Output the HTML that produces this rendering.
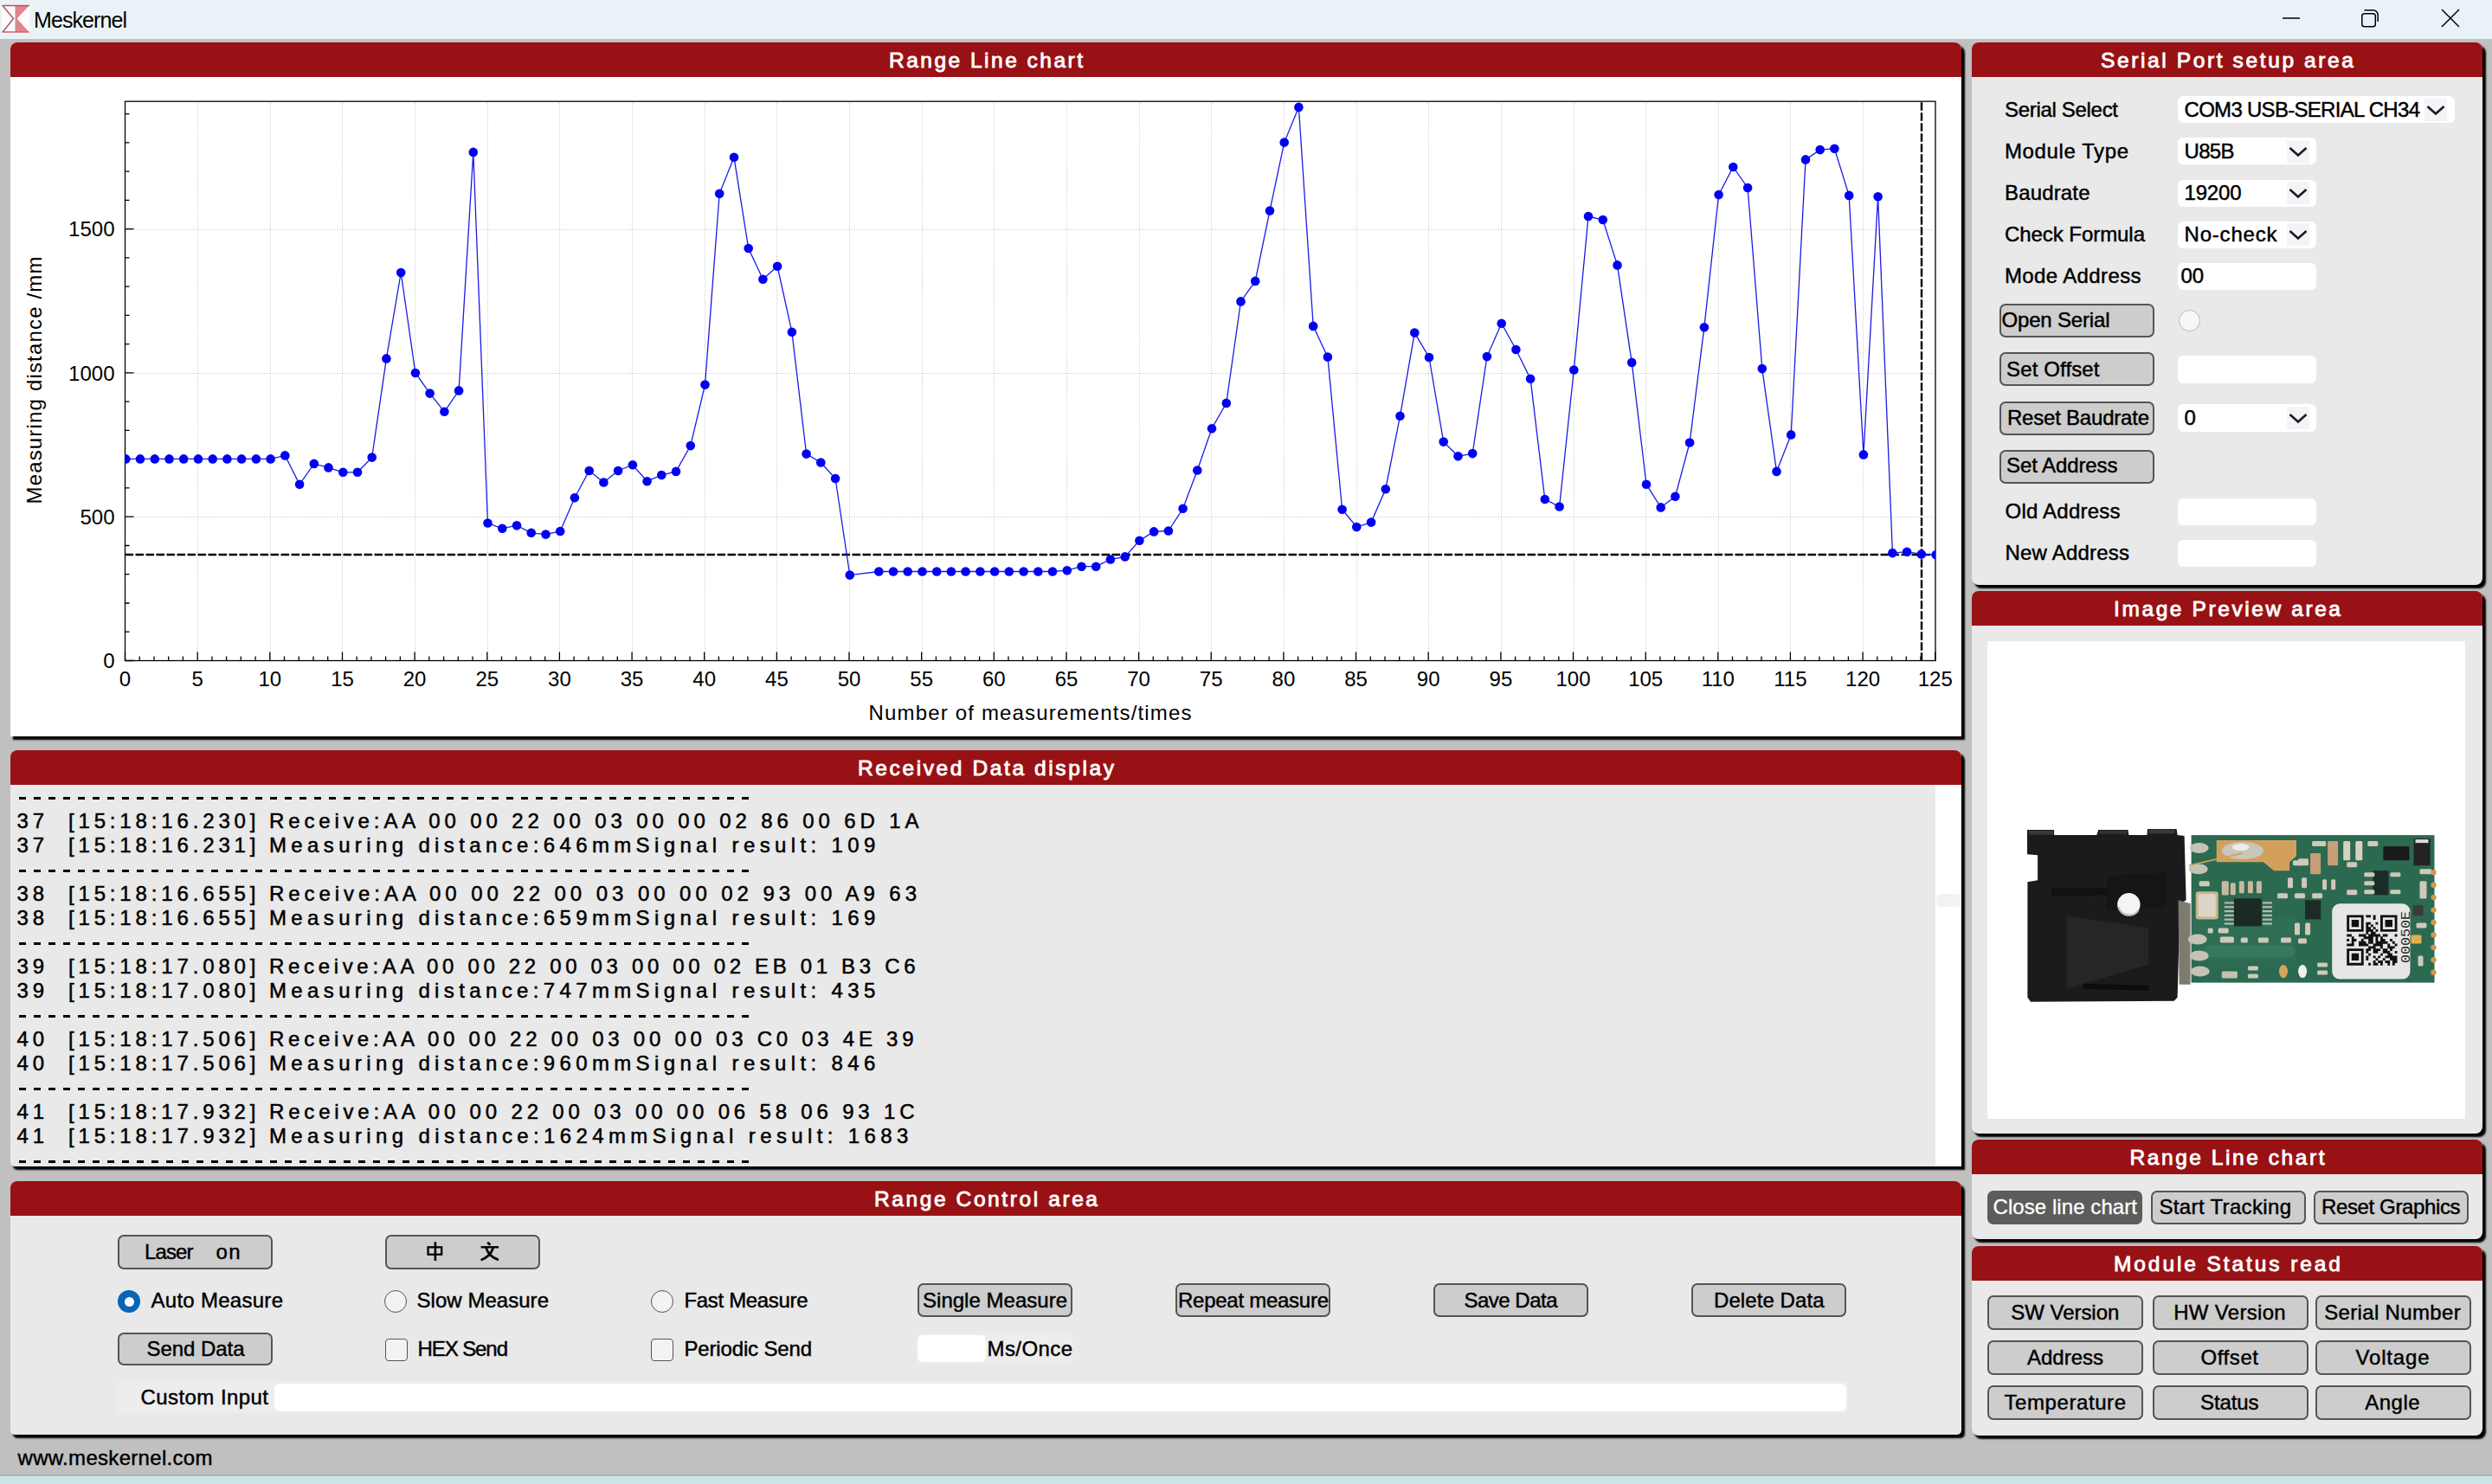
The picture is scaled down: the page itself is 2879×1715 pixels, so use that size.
<!DOCTYPE html><html><head><meta charset="utf-8"><style>
*{margin:0;padding:0;box-sizing:border-box}
html,body{width:2879px;height:1715px;overflow:hidden;background:#c0c0c0;font-family:"Liberation Sans", sans-serif;color:#000}
.a{position:absolute}
.panel{position:absolute;border-radius:8px;box-shadow:3.5px 4px 2px #000;background:#e9e9e9;overflow:hidden}
.hdr{position:absolute;left:0;top:0;right:0;height:40px;background:#981114}
.btn{position:absolute;background:#cdcdcd;border:2px solid #555;border-radius:7px}
.inp{position:absolute;background:#fff;border-radius:6px}
</style></head><body>
<div class="a" style="left:0;top:0;width:2879px;height:45px;background:#e9f3f7"></div>
<svg class="a" style="left:0;top:0" width="40" height="45" viewBox="0 0 40 45">
<rect x="2" y="5.5" width="32.5" height="33" fill="#fdfbfc"/>
<polygon points="17.5,6.5 33.5,6.5 19.6,21.5 33.5,37 17.5,37" fill="#dd8690"/>
<line x1="2.5" y1="6.5" x2="33.8" y2="6.5" stroke="#b9566a" stroke-width="1.6"/>
<line x1="2.5" y1="37" x2="33.8" y2="37" stroke="#cf6676" stroke-width="1.6"/>
<polyline points="3,6.5 15.6,21.5 3,37" fill="none" stroke="#b14f64" stroke-width="1.4"/>
</svg>
<svg class="a" style="left:2600px;top:0" width="279" height="45" viewBox="2600 0 279 45">
<line x1="2637" y1="21" x2="2657" y2="21" stroke="#000" stroke-width="1.5"/>
<rect x="2728.8" y="15.8" width="15.5" height="15" rx="2.8" fill="none" stroke="#000" stroke-width="1.5"/>
<path d="M2731.5 11.8 h10 a5.5 5.5 0 0 1 5.7 5.5 v7.8" fill="none" stroke="#000" stroke-width="1.5"/>
<path d="M2821 11 L2841 31 M2841 11 L2821 31" stroke="#000" stroke-width="1.5"/>
</svg>
<div class="a" style="left:0;top:1704px;width:2879px;height:2px;background:#a9b4bc"></div><div class="a" style="left:0;top:1706px;width:2879px;height:9px;background:#cfe4e8"></div>
<div class="panel" style="left:12px;top:49px;width:2254px;height:802px;background:#fff;border-radius:8px 8px 0 0"><div class="hdr"></div></div>
<svg class="a" style="left:0;top:0" width="2879" height="900" viewBox="0 0 2879 900">
<line x1="228.5" y1="119.2" x2="228.5" y2="763.5" stroke="#bdbdbd" stroke-width="1" stroke-dasharray="1 2"/>
<line x1="312.5" y1="119.2" x2="312.5" y2="763.5" stroke="#bdbdbd" stroke-width="1" stroke-dasharray="1 2"/>
<line x1="395.5" y1="119.2" x2="395.5" y2="763.5" stroke="#bdbdbd" stroke-width="1" stroke-dasharray="1 2"/>
<line x1="479.5" y1="119.2" x2="479.5" y2="763.5" stroke="#bdbdbd" stroke-width="1" stroke-dasharray="1 2"/>
<line x1="563.5" y1="119.2" x2="563.5" y2="763.5" stroke="#bdbdbd" stroke-width="1" stroke-dasharray="1 2"/>
<line x1="646.5" y1="119.2" x2="646.5" y2="763.5" stroke="#bdbdbd" stroke-width="1" stroke-dasharray="1 2"/>
<line x1="730.5" y1="119.2" x2="730.5" y2="763.5" stroke="#bdbdbd" stroke-width="1" stroke-dasharray="1 2"/>
<line x1="814.5" y1="119.2" x2="814.5" y2="763.5" stroke="#bdbdbd" stroke-width="1" stroke-dasharray="1 2"/>
<line x1="897.5" y1="119.2" x2="897.5" y2="763.5" stroke="#bdbdbd" stroke-width="1" stroke-dasharray="1 2"/>
<line x1="981.5" y1="119.2" x2="981.5" y2="763.5" stroke="#bdbdbd" stroke-width="1" stroke-dasharray="1 2"/>
<line x1="1065.5" y1="119.2" x2="1065.5" y2="763.5" stroke="#bdbdbd" stroke-width="1" stroke-dasharray="1 2"/>
<line x1="1148.5" y1="119.2" x2="1148.5" y2="763.5" stroke="#bdbdbd" stroke-width="1" stroke-dasharray="1 2"/>
<line x1="1232.5" y1="119.2" x2="1232.5" y2="763.5" stroke="#bdbdbd" stroke-width="1" stroke-dasharray="1 2"/>
<line x1="1316.5" y1="119.2" x2="1316.5" y2="763.5" stroke="#bdbdbd" stroke-width="1" stroke-dasharray="1 2"/>
<line x1="1399.5" y1="119.2" x2="1399.5" y2="763.5" stroke="#bdbdbd" stroke-width="1" stroke-dasharray="1 2"/>
<line x1="1483.5" y1="119.2" x2="1483.5" y2="763.5" stroke="#bdbdbd" stroke-width="1" stroke-dasharray="1 2"/>
<line x1="1567.5" y1="119.2" x2="1567.5" y2="763.5" stroke="#bdbdbd" stroke-width="1" stroke-dasharray="1 2"/>
<line x1="1650.5" y1="119.2" x2="1650.5" y2="763.5" stroke="#bdbdbd" stroke-width="1" stroke-dasharray="1 2"/>
<line x1="1734.5" y1="119.2" x2="1734.5" y2="763.5" stroke="#bdbdbd" stroke-width="1" stroke-dasharray="1 2"/>
<line x1="1818.5" y1="119.2" x2="1818.5" y2="763.5" stroke="#bdbdbd" stroke-width="1" stroke-dasharray="1 2"/>
<line x1="1901.5" y1="119.2" x2="1901.5" y2="763.5" stroke="#bdbdbd" stroke-width="1" stroke-dasharray="1 2"/>
<line x1="1985.5" y1="119.2" x2="1985.5" y2="763.5" stroke="#bdbdbd" stroke-width="1" stroke-dasharray="1 2"/>
<line x1="2068.5" y1="119.2" x2="2068.5" y2="763.5" stroke="#bdbdbd" stroke-width="1" stroke-dasharray="1 2"/>
<line x1="2152.5" y1="119.2" x2="2152.5" y2="763.5" stroke="#bdbdbd" stroke-width="1" stroke-dasharray="1 2"/>
<line x1="146.5" y1="597.5" x2="2234.0" y2="597.5" stroke="#bdbdbd" stroke-width="1" stroke-dasharray="1 2"/>
<line x1="146.5" y1="431.5" x2="2234.0" y2="431.5" stroke="#bdbdbd" stroke-width="1" stroke-dasharray="1 2"/>
<line x1="146.5" y1="265.5" x2="2234.0" y2="265.5" stroke="#bdbdbd" stroke-width="1" stroke-dasharray="1 2"/>
<rect x="144.5" y="117.2" width="2091.5" height="646.3" fill="none" stroke="#000" stroke-width="1.3"/>
<path d="M144.5 763.5 v-10 M161.2 763.5 v-5 M178.0 763.5 v-5 M194.7 763.5 v-5 M211.4 763.5 v-5 M228.2 763.5 v-10 M244.9 763.5 v-5 M261.6 763.5 v-5 M278.3 763.5 v-5 M295.1 763.5 v-5 M311.8 763.5 v-10 M328.5 763.5 v-5 M345.3 763.5 v-5 M362.0 763.5 v-5 M378.7 763.5 v-5 M395.5 763.5 v-10 M412.2 763.5 v-5 M428.9 763.5 v-5 M445.6 763.5 v-5 M462.4 763.5 v-5 M479.1 763.5 v-10 M495.8 763.5 v-5 M512.6 763.5 v-5 M529.3 763.5 v-5 M546.0 763.5 v-5 M562.8 763.5 v-10 M579.5 763.5 v-5 M596.2 763.5 v-5 M612.9 763.5 v-5 M629.7 763.5 v-5 M646.4 763.5 v-10 M663.1 763.5 v-5 M679.9 763.5 v-5 M696.6 763.5 v-5 M713.3 763.5 v-5 M730.1 763.5 v-10 M746.8 763.5 v-5 M763.5 763.5 v-5 M780.2 763.5 v-5 M797.0 763.5 v-5 M813.7 763.5 v-10 M830.4 763.5 v-5 M847.2 763.5 v-5 M863.9 763.5 v-5 M880.6 763.5 v-5 M897.4 763.5 v-10 M914.1 763.5 v-5 M930.8 763.5 v-5 M947.5 763.5 v-5 M964.3 763.5 v-5 M981.0 763.5 v-10 M997.7 763.5 v-5 M1014.5 763.5 v-5 M1031.2 763.5 v-5 M1047.9 763.5 v-5 M1064.7 763.5 v-10 M1081.4 763.5 v-5 M1098.1 763.5 v-5 M1114.8 763.5 v-5 M1131.6 763.5 v-5 M1148.3 763.5 v-10 M1165.0 763.5 v-5 M1181.8 763.5 v-5 M1198.5 763.5 v-5 M1215.2 763.5 v-5 M1232.0 763.5 v-10 M1248.7 763.5 v-5 M1265.4 763.5 v-5 M1282.1 763.5 v-5 M1298.9 763.5 v-5 M1315.6 763.5 v-10 M1332.3 763.5 v-5 M1349.1 763.5 v-5 M1365.8 763.5 v-5 M1382.5 763.5 v-5 M1399.2 763.5 v-10 M1416.0 763.5 v-5 M1432.7 763.5 v-5 M1449.4 763.5 v-5 M1466.2 763.5 v-5 M1482.9 763.5 v-10 M1499.6 763.5 v-5 M1516.4 763.5 v-5 M1533.1 763.5 v-5 M1549.8 763.5 v-5 M1566.5 763.5 v-10 M1583.3 763.5 v-5 M1600.0 763.5 v-5 M1616.7 763.5 v-5 M1633.5 763.5 v-5 M1650.2 763.5 v-10 M1666.9 763.5 v-5 M1683.7 763.5 v-5 M1700.4 763.5 v-5 M1717.1 763.5 v-5 M1733.9 763.5 v-10 M1750.6 763.5 v-5 M1767.3 763.5 v-5 M1784.0 763.5 v-5 M1800.8 763.5 v-5 M1817.5 763.5 v-10 M1834.2 763.5 v-5 M1851.0 763.5 v-5 M1867.7 763.5 v-5 M1884.4 763.5 v-5 M1901.2 763.5 v-10 M1917.9 763.5 v-5 M1934.6 763.5 v-5 M1951.3 763.5 v-5 M1968.1 763.5 v-5 M1984.8 763.5 v-10 M2001.5 763.5 v-5 M2018.3 763.5 v-5 M2035.0 763.5 v-5 M2051.7 763.5 v-5 M2068.4 763.5 v-10 M2085.2 763.5 v-5 M2101.9 763.5 v-5 M2118.6 763.5 v-5 M2135.4 763.5 v-5 M2152.1 763.5 v-10 M2168.8 763.5 v-5 M2185.6 763.5 v-5 M2202.3 763.5 v-5 M2219.0 763.5 v-5 M2235.8 763.5 v-10 M144.5 763.5 h10 M144.5 730.2 h5 M144.5 697.0 h5 M144.5 663.7 h5 M144.5 630.5 h5 M144.5 597.2 h10 M144.5 563.9 h5 M144.5 530.7 h5 M144.5 497.4 h5 M144.5 464.2 h5 M144.5 430.9 h10 M144.5 397.6 h5 M144.5 364.4 h5 M144.5 331.1 h5 M144.5 297.9 h5 M144.5 264.6 h10 M144.5 231.3 h5 M144.5 198.1 h5 M144.5 164.8 h5 M144.5 131.6 h5" stroke="#000" stroke-width="1.3" fill="none"/>
<line x1="144.5" y1="641" x2="2236.0" y2="641" stroke="#000" stroke-width="2.4" stroke-dasharray="9.6 2.4"/>
<line x1="2220" y1="118.2" x2="2220" y2="763.5" stroke="#000" stroke-width="2.4" stroke-dasharray="9.6 2.4"/>
<clipPath id="cp"><rect x="144.5" y="117.2" width="2091.5" height="646.3"/></clipPath>
<g clip-path="url(#cp)"><polyline points="145.3,530.4 162.0,530.4 178.8,530.4 195.5,530.4 212.2,530.4 229.0,530.4 245.7,530.4 262.4,530.4 279.1,530.4 295.9,530.4 312.6,530.4 329.3,526.4 346.1,559.8 362.8,535.9 379.5,540.4 396.3,545.8 413.0,545.8 429.7,528.6 446.4,414.4 463.2,315.0 479.9,431.0 496.6,454.6 513.4,475.8 530.1,451.4 546.8,175.9 563.5,604.5 580.3,610.8 597.0,607.2 613.7,615.8 630.5,617.6 647.2,614.0 663.9,575.2 680.7,544.0 697.4,557.5 714.1,544.0 730.9,537.2 747.6,556.2 764.3,549.0 781.0,544.9 797.8,515.1 814.5,444.6 831.2,223.8 848.0,181.8 864.7,287.0 881.4,322.7 898.1,307.8 914.9,383.7 931.6,524.6 948.3,534.5 965.1,553.0 981.8,664.6 1015.3,660.5 1032.0,660.5 1048.7,660.5 1065.5,660.5 1082.2,660.5 1098.9,660.5 1115.6,660.5 1132.4,660.5 1149.1,660.5 1165.8,660.5 1182.6,660.5 1199.3,660.5 1216.0,660.5 1232.8,659.2 1249.5,654.7 1266.2,654.7 1282.9,646.5 1299.7,643.4 1316.4,624.8 1333.1,614.4 1349.9,613.5 1366.6,587.8 1383.3,543.5 1400.0,495.2 1416.8,465.9 1433.5,348.4 1450.2,324.9 1467.0,243.6 1483.7,164.6 1500.4,123.9 1517.2,376.9 1533.9,412.6 1550.6,588.7 1567.3,609.0 1584.1,603.6 1600.8,565.2 1617.5,480.8 1634.3,384.6 1651.0,413.0 1667.7,510.6 1684.5,527.3 1701.2,524.1 1717.9,412.1 1734.7,373.7 1751.4,404.0 1768.1,437.8 1784.8,577.0 1801.6,585.5 1818.3,427.5 1835.0,250.0 1851.8,254.0 1868.5,306.4 1885.2,418.9 1902.0,559.8 1918.7,586.4 1935.4,573.8 1952.1,511.5 1968.9,378.2 1985.6,225.1 2002.3,193.0 2019.1,217.0 2035.8,426.1 2052.5,544.9 2069.2,502.4 2086.0,184.4 2102.7,173.1 2119.4,171.7 2136.2,225.9 2152.9,525.4 2169.6,227.2 2186.4,639.1 2203.1,637.7 2219.8,640.4 2236.6,641.3" fill="none" stroke="#1a1ae6" stroke-width="1.3"/>
<circle cx="145.3" cy="530.4" r="5.3" fill="#0000f5"/>
<circle cx="162.0" cy="530.4" r="5.3" fill="#0000f5"/>
<circle cx="178.8" cy="530.4" r="5.3" fill="#0000f5"/>
<circle cx="195.5" cy="530.4" r="5.3" fill="#0000f5"/>
<circle cx="212.2" cy="530.4" r="5.3" fill="#0000f5"/>
<circle cx="229.0" cy="530.4" r="5.3" fill="#0000f5"/>
<circle cx="245.7" cy="530.4" r="5.3" fill="#0000f5"/>
<circle cx="262.4" cy="530.4" r="5.3" fill="#0000f5"/>
<circle cx="279.1" cy="530.4" r="5.3" fill="#0000f5"/>
<circle cx="295.9" cy="530.4" r="5.3" fill="#0000f5"/>
<circle cx="312.6" cy="530.4" r="5.3" fill="#0000f5"/>
<circle cx="329.3" cy="526.4" r="5.3" fill="#0000f5"/>
<circle cx="346.1" cy="559.8" r="5.3" fill="#0000f5"/>
<circle cx="362.8" cy="535.9" r="5.3" fill="#0000f5"/>
<circle cx="379.5" cy="540.4" r="5.3" fill="#0000f5"/>
<circle cx="396.3" cy="545.8" r="5.3" fill="#0000f5"/>
<circle cx="413.0" cy="545.8" r="5.3" fill="#0000f5"/>
<circle cx="429.7" cy="528.6" r="5.3" fill="#0000f5"/>
<circle cx="446.4" cy="414.4" r="5.3" fill="#0000f5"/>
<circle cx="463.2" cy="315.0" r="5.3" fill="#0000f5"/>
<circle cx="479.9" cy="431.0" r="5.3" fill="#0000f5"/>
<circle cx="496.6" cy="454.6" r="5.3" fill="#0000f5"/>
<circle cx="513.4" cy="475.8" r="5.3" fill="#0000f5"/>
<circle cx="530.1" cy="451.4" r="5.3" fill="#0000f5"/>
<circle cx="546.8" cy="175.9" r="5.3" fill="#0000f5"/>
<circle cx="563.5" cy="604.5" r="5.3" fill="#0000f5"/>
<circle cx="580.3" cy="610.8" r="5.3" fill="#0000f5"/>
<circle cx="597.0" cy="607.2" r="5.3" fill="#0000f5"/>
<circle cx="613.7" cy="615.8" r="5.3" fill="#0000f5"/>
<circle cx="630.5" cy="617.6" r="5.3" fill="#0000f5"/>
<circle cx="647.2" cy="614.0" r="5.3" fill="#0000f5"/>
<circle cx="663.9" cy="575.2" r="5.3" fill="#0000f5"/>
<circle cx="680.7" cy="544.0" r="5.3" fill="#0000f5"/>
<circle cx="697.4" cy="557.5" r="5.3" fill="#0000f5"/>
<circle cx="714.1" cy="544.0" r="5.3" fill="#0000f5"/>
<circle cx="730.9" cy="537.2" r="5.3" fill="#0000f5"/>
<circle cx="747.6" cy="556.2" r="5.3" fill="#0000f5"/>
<circle cx="764.3" cy="549.0" r="5.3" fill="#0000f5"/>
<circle cx="781.0" cy="544.9" r="5.3" fill="#0000f5"/>
<circle cx="797.8" cy="515.1" r="5.3" fill="#0000f5"/>
<circle cx="814.5" cy="444.6" r="5.3" fill="#0000f5"/>
<circle cx="831.2" cy="223.8" r="5.3" fill="#0000f5"/>
<circle cx="848.0" cy="181.8" r="5.3" fill="#0000f5"/>
<circle cx="864.7" cy="287.0" r="5.3" fill="#0000f5"/>
<circle cx="881.4" cy="322.7" r="5.3" fill="#0000f5"/>
<circle cx="898.1" cy="307.8" r="5.3" fill="#0000f5"/>
<circle cx="914.9" cy="383.7" r="5.3" fill="#0000f5"/>
<circle cx="931.6" cy="524.6" r="5.3" fill="#0000f5"/>
<circle cx="948.3" cy="534.5" r="5.3" fill="#0000f5"/>
<circle cx="965.1" cy="553.0" r="5.3" fill="#0000f5"/>
<circle cx="981.8" cy="664.6" r="5.3" fill="#0000f5"/>
<circle cx="1015.3" cy="660.5" r="5.3" fill="#0000f5"/>
<circle cx="1032.0" cy="660.5" r="5.3" fill="#0000f5"/>
<circle cx="1048.7" cy="660.5" r="5.3" fill="#0000f5"/>
<circle cx="1065.5" cy="660.5" r="5.3" fill="#0000f5"/>
<circle cx="1082.2" cy="660.5" r="5.3" fill="#0000f5"/>
<circle cx="1098.9" cy="660.5" r="5.3" fill="#0000f5"/>
<circle cx="1115.6" cy="660.5" r="5.3" fill="#0000f5"/>
<circle cx="1132.4" cy="660.5" r="5.3" fill="#0000f5"/>
<circle cx="1149.1" cy="660.5" r="5.3" fill="#0000f5"/>
<circle cx="1165.8" cy="660.5" r="5.3" fill="#0000f5"/>
<circle cx="1182.6" cy="660.5" r="5.3" fill="#0000f5"/>
<circle cx="1199.3" cy="660.5" r="5.3" fill="#0000f5"/>
<circle cx="1216.0" cy="660.5" r="5.3" fill="#0000f5"/>
<circle cx="1232.8" cy="659.2" r="5.3" fill="#0000f5"/>
<circle cx="1249.5" cy="654.7" r="5.3" fill="#0000f5"/>
<circle cx="1266.2" cy="654.7" r="5.3" fill="#0000f5"/>
<circle cx="1282.9" cy="646.5" r="5.3" fill="#0000f5"/>
<circle cx="1299.7" cy="643.4" r="5.3" fill="#0000f5"/>
<circle cx="1316.4" cy="624.8" r="5.3" fill="#0000f5"/>
<circle cx="1333.1" cy="614.4" r="5.3" fill="#0000f5"/>
<circle cx="1349.9" cy="613.5" r="5.3" fill="#0000f5"/>
<circle cx="1366.6" cy="587.8" r="5.3" fill="#0000f5"/>
<circle cx="1383.3" cy="543.5" r="5.3" fill="#0000f5"/>
<circle cx="1400.0" cy="495.2" r="5.3" fill="#0000f5"/>
<circle cx="1416.8" cy="465.9" r="5.3" fill="#0000f5"/>
<circle cx="1433.5" cy="348.4" r="5.3" fill="#0000f5"/>
<circle cx="1450.2" cy="324.9" r="5.3" fill="#0000f5"/>
<circle cx="1467.0" cy="243.6" r="5.3" fill="#0000f5"/>
<circle cx="1483.7" cy="164.6" r="5.3" fill="#0000f5"/>
<circle cx="1500.4" cy="123.9" r="5.3" fill="#0000f5"/>
<circle cx="1517.2" cy="376.9" r="5.3" fill="#0000f5"/>
<circle cx="1533.9" cy="412.6" r="5.3" fill="#0000f5"/>
<circle cx="1550.6" cy="588.7" r="5.3" fill="#0000f5"/>
<circle cx="1567.3" cy="609.0" r="5.3" fill="#0000f5"/>
<circle cx="1584.1" cy="603.6" r="5.3" fill="#0000f5"/>
<circle cx="1600.8" cy="565.2" r="5.3" fill="#0000f5"/>
<circle cx="1617.5" cy="480.8" r="5.3" fill="#0000f5"/>
<circle cx="1634.3" cy="384.6" r="5.3" fill="#0000f5"/>
<circle cx="1651.0" cy="413.0" r="5.3" fill="#0000f5"/>
<circle cx="1667.7" cy="510.6" r="5.3" fill="#0000f5"/>
<circle cx="1684.5" cy="527.3" r="5.3" fill="#0000f5"/>
<circle cx="1701.2" cy="524.1" r="5.3" fill="#0000f5"/>
<circle cx="1717.9" cy="412.1" r="5.3" fill="#0000f5"/>
<circle cx="1734.7" cy="373.7" r="5.3" fill="#0000f5"/>
<circle cx="1751.4" cy="404.0" r="5.3" fill="#0000f5"/>
<circle cx="1768.1" cy="437.8" r="5.3" fill="#0000f5"/>
<circle cx="1784.8" cy="577.0" r="5.3" fill="#0000f5"/>
<circle cx="1801.6" cy="585.5" r="5.3" fill="#0000f5"/>
<circle cx="1818.3" cy="427.5" r="5.3" fill="#0000f5"/>
<circle cx="1835.0" cy="250.0" r="5.3" fill="#0000f5"/>
<circle cx="1851.8" cy="254.0" r="5.3" fill="#0000f5"/>
<circle cx="1868.5" cy="306.4" r="5.3" fill="#0000f5"/>
<circle cx="1885.2" cy="418.9" r="5.3" fill="#0000f5"/>
<circle cx="1902.0" cy="559.8" r="5.3" fill="#0000f5"/>
<circle cx="1918.7" cy="586.4" r="5.3" fill="#0000f5"/>
<circle cx="1935.4" cy="573.8" r="5.3" fill="#0000f5"/>
<circle cx="1952.1" cy="511.5" r="5.3" fill="#0000f5"/>
<circle cx="1968.9" cy="378.2" r="5.3" fill="#0000f5"/>
<circle cx="1985.6" cy="225.1" r="5.3" fill="#0000f5"/>
<circle cx="2002.3" cy="193.0" r="5.3" fill="#0000f5"/>
<circle cx="2019.1" cy="217.0" r="5.3" fill="#0000f5"/>
<circle cx="2035.8" cy="426.1" r="5.3" fill="#0000f5"/>
<circle cx="2052.5" cy="544.9" r="5.3" fill="#0000f5"/>
<circle cx="2069.2" cy="502.4" r="5.3" fill="#0000f5"/>
<circle cx="2086.0" cy="184.4" r="5.3" fill="#0000f5"/>
<circle cx="2102.7" cy="173.1" r="5.3" fill="#0000f5"/>
<circle cx="2119.4" cy="171.7" r="5.3" fill="#0000f5"/>
<circle cx="2136.2" cy="225.9" r="5.3" fill="#0000f5"/>
<circle cx="2152.9" cy="525.4" r="5.3" fill="#0000f5"/>
<circle cx="2169.6" cy="227.2" r="5.3" fill="#0000f5"/>
<circle cx="2186.4" cy="639.1" r="5.3" fill="#0000f5"/>
<circle cx="2203.1" cy="637.7" r="5.3" fill="#0000f5"/>
<circle cx="2219.8" cy="640.4" r="5.3" fill="#0000f5"/>
<circle cx="2236.6" cy="641.3" r="5.3" fill="#0000f5"/>
</g></svg>
<div class="panel" style="left:12px;top:867px;width:2254px;height:481px;background:#e9e9e9;border-radius:8px 8px 0 5px"><div class="hdr"></div></div>
<div class="a" style="left:2236px;top:907px;width:30px;height:441px;background:#fff"></div>
<div class="a" style="left:2237px;top:1033px;width:28px;height:15px;background:#f2f2f2;border-radius:5px"></div>
<div class="a" style="left:22px;top:921.0px;width:846px;height:3.4px;background:repeating-linear-gradient(90deg,#000 0 8px,transparent 8px 17.05px)"></div>
<div class="a" style="left:22px;top:1005.0px;width:846px;height:3.4px;background:repeating-linear-gradient(90deg,#000 0 8px,transparent 8px 17.05px)"></div>
<div class="a" style="left:22px;top:1089.0px;width:846px;height:3.4px;background:repeating-linear-gradient(90deg,#000 0 8px,transparent 8px 17.05px)"></div>
<div class="a" style="left:22px;top:1173.0px;width:846px;height:3.4px;background:repeating-linear-gradient(90deg,#000 0 8px,transparent 8px 17.05px)"></div>
<div class="a" style="left:22px;top:1257.0px;width:846px;height:3.4px;background:repeating-linear-gradient(90deg,#000 0 8px,transparent 8px 17.05px)"></div>
<div class="a" style="left:22px;top:1341.0px;width:846px;height:3.4px;background:repeating-linear-gradient(90deg,#000 0 8px,transparent 8px 17.05px)"></div>
<div class="panel" style="left:12px;top:1365px;width:2254px;height:293px;background:#e9e9e9;border-radius:8px 8px 5px 5px"><div class="hdr"></div></div>
<div class="btn" style="left:136px;top:1427px;width:179px;height:39.5px;"></div>
<div class="btn" style="left:444.5px;top:1427px;width:179px;height:39.5px;"></div>
<svg class="a" style="left:490px;top:1434px" width="90" height="30" viewBox="0 0 90 30">
<g stroke="#000" fill="none">
<rect x="4.55" y="7.35" width="15.6" height="8.4" stroke-width="2.3"/>
<line x1="12.9" y1="1.2" x2="12.9" y2="23" stroke-width="2.6"/>
<line x1="73.2" y1="1.8" x2="76.4" y2="4.8" stroke-width="2.6"/>
<line x1="65.6" y1="7.3" x2="86.1" y2="7.3" stroke-width="2.4"/>
<path d="M71.6 8.3 C73.5 14 78.5 19.5 86 22" stroke-width="2.7"/>
<path d="M79.8 8.3 C77.8 14 72.8 19.5 65.6 22.2" stroke-width="2.7"/>
</g></svg>
<div class="a" style="left:136px;top:1491px;width:26px;height:26px;border-radius:50%;background:#0a63b8"></div>
<div class="a" style="left:143.5px;top:1498.5px;width:11px;height:11px;border-radius:50%;background:#fff"></div>
<div class="a" style="left:444px;top:1491px;width:26px;height:26px;border-radius:50%;background:#f3f3f3;border:1.3px solid #555"></div>
<div class="a" style="left:752px;top:1491px;width:26px;height:26px;border-radius:50%;background:#f3f3f3;border:1.3px solid #555"></div>
<div class="btn" style="left:1060px;top:1483px;width:179px;height:39px;"></div>
<div class="btn" style="left:1358px;top:1483px;width:179px;height:39px;"></div>
<div class="btn" style="left:1656px;top:1483px;width:179px;height:39px;"></div>
<div class="btn" style="left:1954px;top:1483px;width:179px;height:39px;"></div>
<div class="btn" style="left:136px;top:1540px;width:179px;height:38px;"></div>
<div class="a" style="left:444.5px;top:1547px;width:26px;height:26px;border-radius:4px;background:#f3f3f3;border:1.3px solid #555"></div>
<div class="a" style="left:752px;top:1547px;width:26px;height:26px;border-radius:4px;background:#f3f3f3;border:1.3px solid #555"></div>
<div class="a" style="left:1060px;top:1541px;width:179px;height:35px;background:#ededed;border-radius:5px"></div>
<div class="inp" style="left:1060px;top:1543px;width:79px;height:31px"></div>
<div class="a" style="left:135px;top:1596px;width:2000px;height:37px;background:#ededed;border-radius:5px"></div>
<div class="inp" style="left:317px;top:1599px;width:1816px;height:32px"></div>
<div class="panel" style="left:2278px;top:49px;width:590px;height:627px;background:#e9e9e9;border-radius:8px"><div class="hdr"></div></div>
<div class="inp" style="left:2516px;top:111px;width:320px;height:31px"></div>
<svg class="a" style="left:2801px;top:113.5px" width="26" height="26" viewBox="0 0 26 26"><rect x="0" y="0" width="26" height="26" fill="#f4f4f6"/><path d="M3.5 9 L13 17.5 L22.5 9" fill="none" stroke="#1c1c28" stroke-width="2.7"/></svg>
<div class="inp" style="left:2516px;top:159px;width:160px;height:31px"></div>
<svg class="a" style="left:2642px;top:161.5px" width="26" height="26" viewBox="0 0 26 26"><rect x="0" y="0" width="26" height="26" fill="#f4f4f6"/><path d="M3.5 9 L13 17.5 L22.5 9" fill="none" stroke="#1c1c28" stroke-width="2.7"/></svg>
<div class="inp" style="left:2516px;top:207.5px;width:160px;height:31px"></div>
<svg class="a" style="left:2642px;top:210.0px" width="26" height="26" viewBox="0 0 26 26"><rect x="0" y="0" width="26" height="26" fill="#f4f4f6"/><path d="M3.5 9 L13 17.5 L22.5 9" fill="none" stroke="#1c1c28" stroke-width="2.7"/></svg>
<div class="inp" style="left:2516px;top:255.5px;width:160px;height:31px"></div>
<svg class="a" style="left:2642px;top:258.0px" width="26" height="26" viewBox="0 0 26 26"><rect x="0" y="0" width="26" height="26" fill="#f4f4f6"/><path d="M3.5 9 L13 17.5 L22.5 9" fill="none" stroke="#1c1c28" stroke-width="2.7"/></svg>
<div class="inp" style="left:2516px;top:303.5px;width:160px;height:31px"></div>
<div class="btn" style="left:2310px;top:351px;width:179px;height:39px;"></div>
<div class="a" style="left:2517px;top:358px;width:25px;height:25px;border-radius:50%;background:#f7f7f7;border:1.2px solid #b8b8b8"></div>
<div class="btn" style="left:2310px;top:407px;width:179px;height:39px;"></div>
<div class="inp" style="left:2516px;top:411px;width:160px;height:32px"></div>
<div class="btn" style="left:2310px;top:463.5px;width:179px;height:39px;"></div>
<div class="inp" style="left:2516px;top:467px;width:160px;height:32px"></div>
<svg class="a" style="left:2642px;top:470.0px" width="26" height="26" viewBox="0 0 26 26"><rect x="0" y="0" width="26" height="26" fill="#f4f4f6"/><path d="M3.5 9 L13 17.5 L22.5 9" fill="none" stroke="#1c1c28" stroke-width="2.7"/></svg>
<div class="btn" style="left:2310px;top:519.5px;width:179px;height:39px;"></div>
<div class="inp" style="left:2516px;top:575.5px;width:160px;height:31px"></div>
<div class="inp" style="left:2516px;top:623.5px;width:160px;height:31px"></div>
<div class="panel" style="left:2278px;top:683px;width:590px;height:627px;background:#e9e9e9;border-radius:8px"><div class="hdr"></div></div>
<div class="a" style="left:2296px;top:741px;width:552px;height:552px;background:#fff"></div>
<svg class="a" style="left:2330px;top:940px" width="500" height="230" viewBox="2330 940 500 230">
<path d="M2342.0 959.1 L2373.1 959.1 L2373.1 965.1 L2422.3 965.1 L2424.3 959.1 L2458.4 959.1 L2459.4 965.1 L2480.5 965.1 L2480.9 958.1 L2514.6 958.1 L2515.6 965.1 L2523.6 966.1 L2525.6 1040.3 L2518.6 1044.3 L2515.6 1152.7 L2511.6 1156.7 L2346.1 1157.7 L2342.4 1152.7 L2342.4 1019.3 L2354.1 1017.2 L2354.1 988.2 L2342.0 987.2 Z" fill="#1b1b1b"/>
<path d="M2388.1861958266454 1058.378812199037 L2482.4879614767256 1072.4237560192616 L2482.4879614767256 1114.5585874799358 L2388.1861958266454 1142.6484751203852 Z" fill="#262626"/>
<path d="M2370.128410914928 1026.2760834670946 L2434.333868378812 1026.2760834670946 L2434.333868378812 1034.3017656500801 L2370.128410914928 1036.3081861958267 Z" fill="#111"/>
<path d="M2434.333868378812 1012.23113964687 L2502.5521669341892 1008.2182985553773 L2502.5521669341892 1048.346709470305 L2434.333868378812 1052.3595505617977 Z" fill="#151515"/>
<path d="M2406.2439807383626 1136.629213483146 L2482.4879614767256 1138.6356340288926 L2482.4879614767256 1144.6548956661316 L2406.2439807383626 1142.6484751203852 Z" fill="#0c0c0c"/>
<rect x="2344.044943820225" y="959.6629213483146" width="28.1" height="5.0" fill="#3a3a3a"/>
<rect x="2482.4879614767256" y="958.4590690208668" width="30.1" height="5.0" fill="#3a3a3a"/>
<rect x="2425.3049759229534" y="959.6629213483146" width="32.1" height="4.0" fill="#333"/>
<path d="M2516.597110754414 1040.3210272873193 L2530.6420545746387 1044.3338683788122 L2530.6420545746387 1137.6324237560193 L2517.6003210272875 1137.6324237560193 Z" fill="#7d7b6e"/>
<circle cx="2459.4" cy="1045.3" r="13.2" fill="#f4f4f4"/>
<path d="M2447.3756019261637 1048.346709470305 A13.2 13.2 0 0 0 2470.449438202247 1052.3595505617977" fill="none" stroke="#b9b9b9" stroke-width="2"/>
<rect x="2531.6" y="965.1" width="280.9" height="170.5" fill="#2b6a50"/>
<rect x="2532.6" y="1060.4" width="120.4" height="50.2" fill="#2f7155" opacity="0.7"/>
<rect x="2546.7" y="1092.5" width="104.3" height="14.0" rx="6" fill="#367a5d"/>
<path d="M2560.7 971.1 L2653.0 971.1 L2653.0 989.2 L2645.0 996.2 L2645.0 1006.2 L2627.0 1006.2 L2614.9 996.2 L2560.7 996.2 Z" fill="#d3a05c"/>
<ellipse cx="2590.8" cy="983.1" rx="24" ry="10" fill="#c9c6bb"/>
<ellipse cx="2588.8" cy="979.1" rx="10" ry="4" fill="#eeece4"/>
<ellipse cx="2540.7" cy="980.1" rx="11" ry="6" fill="#c5c3b5"/>
<ellipse cx="2539.7" cy="1004.2" rx="11" ry="6" fill="#c5c3b5"/>
<ellipse cx="2538.7" cy="1085.5" rx="11" ry="6" fill="#c5c3b5"/>
<ellipse cx="2540.7" cy="1104.5" rx="11" ry="6" fill="#c5c3b5"/>
<ellipse cx="2541.7" cy="1122.6" rx="11" ry="6" fill="#c5c3b5"/>
<path d="M2528.6356340288926 1000.1926163723916 L2590.8346709470306 986.1476725521669" stroke="#c9a25e" stroke-width="1.6"/>
<rect x="2536.7" y="1030.3" width="26.1" height="32.1" rx="3" fill="#c8b58b"/>
<rect x="2539.7" y="1033.3" width="20.1" height="26.1" rx="2" fill="#dcd6c8"/>
<rect x="2580.8" y="1038.3" width="32.1" height="32.1" fill="#1c2a25"/>
<rect x="2569.8" y="1042.3" width="11" height="2.2" fill="#b8b8b0"/>
<rect x="2613.9" y="1042.3" width="11" height="2.2" fill="#b8b8b0"/>
<rect x="2569.8" y="1047.1" width="11" height="2.2" fill="#b8b8b0"/>
<rect x="2613.9" y="1047.1" width="11" height="2.2" fill="#b8b8b0"/>
<rect x="2569.8" y="1052.0" width="11" height="2.2" fill="#b8b8b0"/>
<rect x="2613.9" y="1052.0" width="11" height="2.2" fill="#b8b8b0"/>
<rect x="2569.8" y="1056.8" width="11" height="2.2" fill="#b8b8b0"/>
<rect x="2613.9" y="1056.8" width="11" height="2.2" fill="#b8b8b0"/>
<rect x="2569.8" y="1061.6" width="11" height="2.2" fill="#b8b8b0"/>
<rect x="2613.9" y="1061.6" width="11" height="2.2" fill="#b8b8b0"/>
<rect x="2569.8" y="1066.4" width="11" height="2.2" fill="#b8b8b0"/>
<rect x="2613.9" y="1066.4" width="11" height="2.2" fill="#b8b8b0"/>
<rect x="2663.1" y="1040.3" width="18.1" height="22.1" fill="#1d2b26"/>
<rect x="2741.3" y="1006.2" width="18.1" height="28.1" fill="#1d2b26"/>
<rect x="2753.4" y="978.1" width="30.1" height="16.1" fill="#1a1a1a"/>
<rect x="2788.5" y="969.1" width="19.1" height="31.1" fill="#232323"/>
<rect x="2790.5" y="970.1" width="15.0" height="4.0" fill="#ddd"/>
<rect x="2669.1" y="986.1" width="12.0" height="24.1" rx="1.5" fill="#c89e76"/>
<rect x="2689.1" y="972.1" width="12.0" height="28.1" rx="1.5" fill="#c89e76"/>
<rect x="2707.2" y="972.1" width="8.0" height="22.1" rx="1.5" fill="#d8d0c0"/>
<rect x="2721.3" y="972.1" width="8.0" height="22.1" rx="1.5" fill="#d8d0c0"/>
<rect x="2566.8" y="1018.3" width="8.0" height="16.1" rx="1.5" fill="#c9b8a0"/>
<rect x="2576.8" y="1020.3" width="6.0" height="14.0" rx="1.5" fill="#c9b8a0"/>
<rect x="2586.8" y="1018.3" width="6.0" height="14.0" rx="1.5" fill="#c9b8a0"/>
<rect x="2596.9" y="1018.3" width="6.0" height="14.0" rx="1.5" fill="#c9b8a0"/>
<rect x="2606.9" y="1018.3" width="6.0" height="14.0" rx="1.5" fill="#c9b8a0"/>
<rect x="2643.0" y="1014.2" width="6.0" height="12.0" rx="1.5" fill="#d0c8b8"/>
<rect x="2659.1" y="1014.2" width="6.0" height="12.0" rx="1.5" fill="#d0c8b8"/>
<rect x="2683.1" y="1016.2" width="5.0" height="12.0" rx="1.5" fill="#d0c8b8"/>
<rect x="2693.2" y="1016.2" width="5.0" height="12.0" rx="1.5" fill="#d0c8b8"/>
<rect x="2711.2" y="1028.3" width="12.0" height="6.0" rx="1.5" fill="#d0c8b8"/>
<rect x="2731.3" y="1008.2" width="12.0" height="5.0" rx="1.5" fill="#d0c8b8"/>
<rect x="2731.3" y="1018.3" width="12.0" height="5.0" rx="1.5" fill="#d0c8b8"/>
<rect x="2731.3" y="1028.3" width="12.0" height="5.0" rx="1.5" fill="#d0c8b8"/>
<rect x="2761.4" y="1008.2" width="12.0" height="5.0" rx="1.5" fill="#d0c8b8"/>
<rect x="2761.4" y="1028.3" width="12.0" height="5.0" rx="1.5" fill="#d0c8b8"/>
<rect x="2795.5" y="1018.3" width="8.0" height="20.1" rx="1.5" fill="#d0c8b8"/>
<rect x="2795.5" y="1004.2" width="14.0" height="6.0" rx="1.5" fill="#d0c8b8"/>
<rect x="2562.7" y="1072.4" width="12.0" height="6.0" rx="1.5" fill="#d0c8b8"/>
<rect x="2564.8" y="1082.5" width="16.1" height="7.0" rx="1.5" fill="#d0c8b8"/>
<rect x="2588.8" y="1083.5" width="8.0" height="6.0" rx="1.5" fill="#d0c8b8"/>
<rect x="2608.9" y="1083.5" width="12.0" height="6.0" rx="1.5" fill="#d0c8b8"/>
<rect x="2635.0" y="1083.5" width="12.0" height="6.0" rx="1.5" fill="#d0c8b8"/>
<rect x="2655.0" y="1084.5" width="10.0" height="6.0" rx="1.5" fill="#d0c8b8"/>
<rect x="2651.0" y="1066.4" width="6.0" height="14.0" rx="1.5" fill="#d0c8b8"/>
<rect x="2663.1" y="1066.4" width="6.0" height="14.0" rx="1.5" fill="#d0c8b8"/>
<rect x="2566.8" y="1122.6" width="18.1" height="8.0" rx="1.5" fill="#c8c0b0"/>
<rect x="2596.9" y="1116.6" width="12.0" height="5.0" rx="1.5" fill="#d0c8b8"/>
<rect x="2596.9" y="1125.6" width="12.0" height="5.0" rx="1.5" fill="#d0c8b8"/>
<rect x="2677.1" y="1112.6" width="12.0" height="5.0" rx="1.5" fill="#d0c8b8"/>
<rect x="2677.1" y="1121.6" width="12.0" height="5.0" rx="1.5" fill="#d0c8b8"/>
<rect x="2649.0" y="994.2" width="12.0" height="6.0" rx="1.5" fill="#d0c8b8"/>
<rect x="2540.7" y="1018.3" width="12.0" height="6.0" rx="1.5" fill="#d0c8b8"/>
<rect x="2550.7" y="1072.4" width="6.0" height="6.0" rx="1.5" fill="#d0c8b8"/>
<rect x="2631.0" y="1032.3" width="12.0" height="6.0" rx="1.5" fill="#d0c8b8"/>
<rect x="2651.0" y="1032.3" width="12.0" height="6.0" rx="1.5" fill="#d0c8b8"/>
<rect x="2671.1" y="1032.3" width="12.0" height="6.0" rx="1.5" fill="#d0c8b8"/>
<rect x="2787.5" y="1046.3" width="12.0" height="12.0" rx="1.5" fill="#3a3a3a"/>
<rect x="2791.5" y="1066.4" width="12.0" height="6.0" rx="1.5" fill="#d0c8b8"/>
<rect x="2793.5" y="1104.5" width="6.0" height="12.0" rx="1.5" fill="#d0c8b8"/>
<rect x="2785.5" y="1080.4" width="12.0" height="10.0" rx="1.5" fill="#e0b050"/>
<rect x="2671.1" y="972.1" width="16.1" height="6.0" rx="1.5" fill="#d0c8b8"/>
<rect x="2735.3" y="972.1" width="12.0" height="6.0" rx="1.5" fill="#d0c8b8"/>
<rect x="2711.2" y="996.2" width="12.0" height="6.0" rx="1.5" fill="#d0c8b8"/>
<rect x="2655.0" y="992.2" width="12.0" height="8.0" rx="1.5" fill="#d0c8b8"/>
<ellipse cx="2638.0" cy="1122.6" rx="5" ry="7.5" fill="#d6a45e"/>
<ellipse cx="2660.1" cy="1122.6" rx="5" ry="7.5" fill="#f0f0f0"/>
<circle cx="2811.5" cy="1008.2" r="3.2" fill="#c99a50"/>
<circle cx="2811.5" cy="1022.7" r="3.2" fill="#c99a50"/>
<circle cx="2811.5" cy="1037.1" r="3.2" fill="#c99a50"/>
<circle cx="2811.5" cy="1051.6" r="3.2" fill="#c99a50"/>
<circle cx="2811.5" cy="1066.0" r="3.2" fill="#c99a50"/>
<circle cx="2811.5" cy="1080.4" r="3.2" fill="#c99a50"/>
<circle cx="2811.5" cy="1094.9" r="3.2" fill="#c99a50"/>
<circle cx="2811.5" cy="1109.3" r="3.2" fill="#c99a50"/>
<circle cx="2811.5" cy="1123.8" r="3.2" fill="#c99a50"/>
<rect x="2694.2" y="1044.3" width="90.3" height="87.3" rx="9" fill="#e6e6e6"/>
<rect x="2711.2" y="1057.4" width="58.2" height="58.2" fill="#e6e6e6"/>
<path d="M2711.22 1057.38h2.87v2.87h-2.87zM2713.99 1057.38h2.87v2.87h-2.87zM2716.76 1057.38h2.87v2.87h-2.87zM2719.53 1057.38h2.87v2.87h-2.87zM2722.30 1057.38h2.87v2.87h-2.87zM2725.07 1057.38h2.87v2.87h-2.87zM2727.84 1057.38h2.87v2.87h-2.87zM2733.39 1057.38h2.87v2.87h-2.87zM2736.16 1057.38h2.87v2.87h-2.87zM2741.70 1057.38h2.87v2.87h-2.87zM2750.01 1057.38h2.87v2.87h-2.87zM2752.78 1057.38h2.87v2.87h-2.87zM2755.55 1057.38h2.87v2.87h-2.87zM2758.32 1057.38h2.87v2.87h-2.87zM2761.09 1057.38h2.87v2.87h-2.87zM2763.86 1057.38h2.87v2.87h-2.87zM2766.64 1057.38h2.87v2.87h-2.87zM2711.22 1060.15h2.87v2.87h-2.87zM2727.84 1060.15h2.87v2.87h-2.87zM2741.70 1060.15h2.87v2.87h-2.87zM2750.01 1060.15h2.87v2.87h-2.87zM2766.64 1060.15h2.87v2.87h-2.87zM2711.22 1062.92h2.87v2.87h-2.87zM2716.76 1062.92h2.87v2.87h-2.87zM2719.53 1062.92h2.87v2.87h-2.87zM2722.30 1062.92h2.87v2.87h-2.87zM2727.84 1062.92h2.87v2.87h-2.87zM2750.01 1062.92h2.87v2.87h-2.87zM2755.55 1062.92h2.87v2.87h-2.87zM2758.32 1062.92h2.87v2.87h-2.87zM2761.09 1062.92h2.87v2.87h-2.87zM2766.64 1062.92h2.87v2.87h-2.87zM2711.22 1065.69h2.87v2.87h-2.87zM2716.76 1065.69h2.87v2.87h-2.87zM2719.53 1065.69h2.87v2.87h-2.87zM2722.30 1065.69h2.87v2.87h-2.87zM2727.84 1065.69h2.87v2.87h-2.87zM2733.39 1065.69h2.87v2.87h-2.87zM2736.16 1065.69h2.87v2.87h-2.87zM2744.47 1065.69h2.87v2.87h-2.87zM2750.01 1065.69h2.87v2.87h-2.87zM2755.55 1065.69h2.87v2.87h-2.87zM2758.32 1065.69h2.87v2.87h-2.87zM2761.09 1065.69h2.87v2.87h-2.87zM2766.64 1065.69h2.87v2.87h-2.87zM2711.22 1068.46h2.87v2.87h-2.87zM2716.76 1068.46h2.87v2.87h-2.87zM2719.53 1068.46h2.87v2.87h-2.87zM2722.30 1068.46h2.87v2.87h-2.87zM2727.84 1068.46h2.87v2.87h-2.87zM2733.39 1068.46h2.87v2.87h-2.87zM2738.93 1068.46h2.87v2.87h-2.87zM2750.01 1068.46h2.87v2.87h-2.87zM2755.55 1068.46h2.87v2.87h-2.87zM2758.32 1068.46h2.87v2.87h-2.87zM2761.09 1068.46h2.87v2.87h-2.87zM2766.64 1068.46h2.87v2.87h-2.87zM2711.22 1071.23h2.87v2.87h-2.87zM2727.84 1071.23h2.87v2.87h-2.87zM2733.39 1071.23h2.87v2.87h-2.87zM2736.16 1071.23h2.87v2.87h-2.87zM2741.70 1071.23h2.87v2.87h-2.87zM2750.01 1071.23h2.87v2.87h-2.87zM2766.64 1071.23h2.87v2.87h-2.87zM2711.22 1074.00h2.87v2.87h-2.87zM2713.99 1074.00h2.87v2.87h-2.87zM2716.76 1074.00h2.87v2.87h-2.87zM2719.53 1074.00h2.87v2.87h-2.87zM2722.30 1074.00h2.87v2.87h-2.87zM2725.07 1074.00h2.87v2.87h-2.87zM2727.84 1074.00h2.87v2.87h-2.87zM2733.39 1074.00h2.87v2.87h-2.87zM2736.16 1074.00h2.87v2.87h-2.87zM2738.93 1074.00h2.87v2.87h-2.87zM2744.47 1074.00h2.87v2.87h-2.87zM2750.01 1074.00h2.87v2.87h-2.87zM2752.78 1074.00h2.87v2.87h-2.87zM2755.55 1074.00h2.87v2.87h-2.87zM2758.32 1074.00h2.87v2.87h-2.87zM2761.09 1074.00h2.87v2.87h-2.87zM2763.86 1074.00h2.87v2.87h-2.87zM2766.64 1074.00h2.87v2.87h-2.87zM2733.39 1076.77h2.87v2.87h-2.87zM2738.93 1076.77h2.87v2.87h-2.87zM2741.70 1076.77h2.87v2.87h-2.87zM2711.22 1079.54h2.87v2.87h-2.87zM2713.99 1079.54h2.87v2.87h-2.87zM2725.07 1079.54h2.87v2.87h-2.87zM2727.84 1079.54h2.87v2.87h-2.87zM2730.62 1079.54h2.87v2.87h-2.87zM2736.16 1079.54h2.87v2.87h-2.87zM2738.93 1079.54h2.87v2.87h-2.87zM2741.70 1079.54h2.87v2.87h-2.87zM2744.47 1079.54h2.87v2.87h-2.87zM2747.24 1079.54h2.87v2.87h-2.87zM2752.78 1079.54h2.87v2.87h-2.87zM2755.55 1079.54h2.87v2.87h-2.87zM2766.64 1079.54h2.87v2.87h-2.87zM2716.76 1082.31h2.87v2.87h-2.87zM2730.62 1082.31h2.87v2.87h-2.87zM2733.39 1082.31h2.87v2.87h-2.87zM2736.16 1082.31h2.87v2.87h-2.87zM2738.93 1082.31h2.87v2.87h-2.87zM2744.47 1082.31h2.87v2.87h-2.87zM2750.01 1082.31h2.87v2.87h-2.87zM2711.22 1085.08h2.87v2.87h-2.87zM2716.76 1085.08h2.87v2.87h-2.87zM2719.53 1085.08h2.87v2.87h-2.87zM2727.84 1085.08h2.87v2.87h-2.87zM2736.16 1085.08h2.87v2.87h-2.87zM2738.93 1085.08h2.87v2.87h-2.87zM2744.47 1085.08h2.87v2.87h-2.87zM2750.01 1085.08h2.87v2.87h-2.87zM2752.78 1085.08h2.87v2.87h-2.87zM2761.09 1085.08h2.87v2.87h-2.87zM2716.76 1087.85h2.87v2.87h-2.87zM2725.07 1087.85h2.87v2.87h-2.87zM2727.84 1087.85h2.87v2.87h-2.87zM2730.62 1087.85h2.87v2.87h-2.87zM2736.16 1087.85h2.87v2.87h-2.87zM2738.93 1087.85h2.87v2.87h-2.87zM2744.47 1087.85h2.87v2.87h-2.87zM2747.24 1087.85h2.87v2.87h-2.87zM2750.01 1087.85h2.87v2.87h-2.87zM2752.78 1087.85h2.87v2.87h-2.87zM2755.55 1087.85h2.87v2.87h-2.87zM2763.86 1087.85h2.87v2.87h-2.87zM2711.22 1090.62h2.87v2.87h-2.87zM2713.99 1090.62h2.87v2.87h-2.87zM2716.76 1090.62h2.87v2.87h-2.87zM2725.07 1090.62h2.87v2.87h-2.87zM2727.84 1090.62h2.87v2.87h-2.87zM2730.62 1090.62h2.87v2.87h-2.87zM2733.39 1090.62h2.87v2.87h-2.87zM2741.70 1090.62h2.87v2.87h-2.87zM2744.47 1090.62h2.87v2.87h-2.87zM2747.24 1090.62h2.87v2.87h-2.87zM2750.01 1090.62h2.87v2.87h-2.87zM2758.32 1090.62h2.87v2.87h-2.87zM2766.64 1090.62h2.87v2.87h-2.87zM2736.16 1093.40h2.87v2.87h-2.87zM2738.93 1093.40h2.87v2.87h-2.87zM2741.70 1093.40h2.87v2.87h-2.87zM2750.01 1093.40h2.87v2.87h-2.87zM2758.32 1093.40h2.87v2.87h-2.87zM2761.09 1093.40h2.87v2.87h-2.87zM2763.86 1093.40h2.87v2.87h-2.87zM2711.22 1096.17h2.87v2.87h-2.87zM2713.99 1096.17h2.87v2.87h-2.87zM2716.76 1096.17h2.87v2.87h-2.87zM2719.53 1096.17h2.87v2.87h-2.87zM2722.30 1096.17h2.87v2.87h-2.87zM2725.07 1096.17h2.87v2.87h-2.87zM2727.84 1096.17h2.87v2.87h-2.87zM2733.39 1096.17h2.87v2.87h-2.87zM2736.16 1096.17h2.87v2.87h-2.87zM2741.70 1096.17h2.87v2.87h-2.87zM2744.47 1096.17h2.87v2.87h-2.87zM2747.24 1096.17h2.87v2.87h-2.87zM2752.78 1096.17h2.87v2.87h-2.87zM2755.55 1096.17h2.87v2.87h-2.87zM2761.09 1096.17h2.87v2.87h-2.87zM2711.22 1098.94h2.87v2.87h-2.87zM2727.84 1098.94h2.87v2.87h-2.87zM2733.39 1098.94h2.87v2.87h-2.87zM2741.70 1098.94h2.87v2.87h-2.87zM2744.47 1098.94h2.87v2.87h-2.87zM2752.78 1098.94h2.87v2.87h-2.87zM2755.55 1098.94h2.87v2.87h-2.87zM2758.32 1098.94h2.87v2.87h-2.87zM2766.64 1098.94h2.87v2.87h-2.87zM2711.22 1101.71h2.87v2.87h-2.87zM2716.76 1101.71h2.87v2.87h-2.87zM2719.53 1101.71h2.87v2.87h-2.87zM2722.30 1101.71h2.87v2.87h-2.87zM2727.84 1101.71h2.87v2.87h-2.87zM2736.16 1101.71h2.87v2.87h-2.87zM2750.01 1101.71h2.87v2.87h-2.87zM2758.32 1101.71h2.87v2.87h-2.87zM2761.09 1101.71h2.87v2.87h-2.87zM2711.22 1104.48h2.87v2.87h-2.87zM2716.76 1104.48h2.87v2.87h-2.87zM2719.53 1104.48h2.87v2.87h-2.87zM2722.30 1104.48h2.87v2.87h-2.87zM2727.84 1104.48h2.87v2.87h-2.87zM2733.39 1104.48h2.87v2.87h-2.87zM2741.70 1104.48h2.87v2.87h-2.87zM2747.24 1104.48h2.87v2.87h-2.87zM2755.55 1104.48h2.87v2.87h-2.87zM2758.32 1104.48h2.87v2.87h-2.87zM2761.09 1104.48h2.87v2.87h-2.87zM2763.86 1104.48h2.87v2.87h-2.87zM2766.64 1104.48h2.87v2.87h-2.87zM2711.22 1107.25h2.87v2.87h-2.87zM2716.76 1107.25h2.87v2.87h-2.87zM2719.53 1107.25h2.87v2.87h-2.87zM2722.30 1107.25h2.87v2.87h-2.87zM2727.84 1107.25h2.87v2.87h-2.87zM2733.39 1107.25h2.87v2.87h-2.87zM2744.47 1107.25h2.87v2.87h-2.87zM2752.78 1107.25h2.87v2.87h-2.87zM2761.09 1107.25h2.87v2.87h-2.87zM2763.86 1107.25h2.87v2.87h-2.87zM2766.64 1107.25h2.87v2.87h-2.87zM2711.22 1110.02h2.87v2.87h-2.87zM2727.84 1110.02h2.87v2.87h-2.87zM2741.70 1110.02h2.87v2.87h-2.87zM2747.24 1110.02h2.87v2.87h-2.87zM2750.01 1110.02h2.87v2.87h-2.87zM2755.55 1110.02h2.87v2.87h-2.87zM2758.32 1110.02h2.87v2.87h-2.87zM2763.86 1110.02h2.87v2.87h-2.87zM2766.64 1110.02h2.87v2.87h-2.87zM2711.22 1112.79h2.87v2.87h-2.87zM2713.99 1112.79h2.87v2.87h-2.87zM2716.76 1112.79h2.87v2.87h-2.87zM2719.53 1112.79h2.87v2.87h-2.87zM2722.30 1112.79h2.87v2.87h-2.87zM2725.07 1112.79h2.87v2.87h-2.87zM2727.84 1112.79h2.87v2.87h-2.87zM2736.16 1112.79h2.87v2.87h-2.87zM2741.70 1112.79h2.87v2.87h-2.87zM2744.47 1112.79h2.87v2.87h-2.87zM2750.01 1112.79h2.87v2.87h-2.87zM2758.32 1112.79h2.87v2.87h-2.87zM2763.86 1112.79h2.87v2.87h-2.87z" fill="#111"/>
<text transform="translate(2784 1113) rotate(-90)" font-family='"Liberation Mono", monospace' font-size="15" fill="#222" textLength="60" lengthAdjust="spacingAndGlyphs">00050E</text>
</svg>
<div class="panel" style="left:2278px;top:1317px;width:590px;height:115px;background:#e9e9e9;border-radius:8px"><div class="hdr"></div></div>
<div class="btn" style="left:2296px;top:1375.5px;width:179px;height:39px;background:#5c5c5c;border-color:#5c5c5c"></div>
<div class="btn" style="left:2484.5px;top:1375.5px;width:179px;height:39px;"></div>
<div class="btn" style="left:2672.5px;top:1375.5px;width:179px;height:39px;"></div>
<div class="panel" style="left:2278px;top:1440px;width:590px;height:219px;background:#e9e9e9;border-radius:8px"><div class="hdr"></div></div>
<div class="btn" style="left:2296px;top:1497px;width:180px;height:39.5px;"></div>
<div class="btn" style="left:2486.5px;top:1497px;width:180px;height:39.5px;"></div>
<div class="btn" style="left:2674.5px;top:1497px;width:180px;height:39.5px;"></div>
<div class="btn" style="left:2296px;top:1549px;width:180px;height:39.5px;"></div>
<div class="btn" style="left:2486.5px;top:1549px;width:180px;height:39.5px;"></div>
<div class="btn" style="left:2674.5px;top:1549px;width:180px;height:39.5px;"></div>
<div class="btn" style="left:2296px;top:1601px;width:180px;height:39.5px;"></div>
<div class="btn" style="left:2486.5px;top:1601px;width:180px;height:39.5px;"></div>
<div class="btn" style="left:2674.5px;top:1601px;width:180px;height:39.5px;"></div>
<svg class="a" style="left:0;top:0" width="2879" height="1715" viewBox="0 0 2879 1715" font-family='"Liberation Sans", sans-serif'>
<text x="39" y="32.3" font-size="25" fill="#000" text-anchor="start" textLength="108" lengthAdjust="spacing">Meskernel</text>
<text x="1139.0" y="78.2" font-size="24.5" fill="#fff" stroke="#fff" stroke-width="0.9" text-anchor="middle" textLength="224" lengthAdjust="spacing">Range Line chart</text>
<text x="144.5" y="792.5" font-size="24" fill="#000" text-anchor="middle">0</text>
<text x="228.2" y="792.5" font-size="24" fill="#000" text-anchor="middle">5</text>
<text x="311.8" y="792.5" font-size="24" fill="#000" text-anchor="middle">10</text>
<text x="395.5" y="792.5" font-size="24" fill="#000" text-anchor="middle">15</text>
<text x="479.1" y="792.5" font-size="24" fill="#000" text-anchor="middle">20</text>
<text x="562.8" y="792.5" font-size="24" fill="#000" text-anchor="middle">25</text>
<text x="646.4" y="792.5" font-size="24" fill="#000" text-anchor="middle">30</text>
<text x="730.1" y="792.5" font-size="24" fill="#000" text-anchor="middle">35</text>
<text x="813.7" y="792.5" font-size="24" fill="#000" text-anchor="middle">40</text>
<text x="897.4" y="792.5" font-size="24" fill="#000" text-anchor="middle">45</text>
<text x="981.0" y="792.5" font-size="24" fill="#000" text-anchor="middle">50</text>
<text x="1064.7" y="792.5" font-size="24" fill="#000" text-anchor="middle">55</text>
<text x="1148.3" y="792.5" font-size="24" fill="#000" text-anchor="middle">60</text>
<text x="1232.0" y="792.5" font-size="24" fill="#000" text-anchor="middle">65</text>
<text x="1315.6" y="792.5" font-size="24" fill="#000" text-anchor="middle">70</text>
<text x="1399.2" y="792.5" font-size="24" fill="#000" text-anchor="middle">75</text>
<text x="1482.9" y="792.5" font-size="24" fill="#000" text-anchor="middle">80</text>
<text x="1566.5" y="792.5" font-size="24" fill="#000" text-anchor="middle">85</text>
<text x="1650.2" y="792.5" font-size="24" fill="#000" text-anchor="middle">90</text>
<text x="1733.9" y="792.5" font-size="24" fill="#000" text-anchor="middle">95</text>
<text x="1817.5" y="792.5" font-size="24" fill="#000" text-anchor="middle">100</text>
<text x="1901.2" y="792.5" font-size="24" fill="#000" text-anchor="middle">105</text>
<text x="1984.8" y="792.5" font-size="24" fill="#000" text-anchor="middle">110</text>
<text x="2068.4" y="792.5" font-size="24" fill="#000" text-anchor="middle">115</text>
<text x="2152.1" y="792.5" font-size="24" fill="#000" text-anchor="middle">120</text>
<text x="2235.8" y="792.5" font-size="24" fill="#000" text-anchor="middle">125</text>
<text x="132.5" y="772.1" font-size="24" fill="#000" text-anchor="end">0</text>
<text x="132.5" y="605.8" font-size="24" fill="#000" text-anchor="end">500</text>
<text x="132.5" y="439.5" font-size="24" fill="#000" text-anchor="end">1000</text>
<text x="132.5" y="273.2" font-size="24" fill="#000" text-anchor="end">1500</text>
<text x="1003.5" y="831.5" font-size="24" fill="#000" text-anchor="start" textLength="373" lengthAdjust="spacing">Number of measurements/times</text>
<text transform="translate(47.5 582.5) rotate(-90)" x="0" y="0" font-size="24" textLength="286" lengthAdjust="spacing">Measuring distance /mm</text>
<text x="1139.0" y="896.2" font-size="24.5" fill="#fff" stroke="#fff" stroke-width="0.9" text-anchor="middle" textLength="296" lengthAdjust="spacing">Received Data display</text>
<text x="19.5" y="956.6" font-size="24" letter-spacing="4.85" stroke="#000" stroke-width="0.5" xml:space="preserve">37  [15:18:16.230]</text>
<text x="311" y="956.6" font-size="24" textLength="750.5" lengthAdjust="spacing" stroke="#000" stroke-width="0.5" xml:space="preserve">Receive:AA 00 00 22 00 03 00 00 02 86 00 6D 1A</text>
<text x="19.5" y="984.6" font-size="24" letter-spacing="4.85" stroke="#000" stroke-width="0.5" xml:space="preserve">37  [15:18:16.231]</text>
<text x="311" y="984.6" font-size="24" textLength="700.3" lengthAdjust="spacing" stroke="#000" stroke-width="0.5" xml:space="preserve">Measuring distance:646mmSignal result: 109</text>
<text x="19.5" y="1040.6" font-size="24" letter-spacing="4.85" stroke="#000" stroke-width="0.5" xml:space="preserve">38  [15:18:16.655]</text>
<text x="311" y="1040.6" font-size="24" textLength="748.0" lengthAdjust="spacing" stroke="#000" stroke-width="0.5" xml:space="preserve">Receive:AA 00 00 22 00 03 00 00 02 93 00 A9 63</text>
<text x="19.5" y="1068.6" font-size="24" letter-spacing="4.85" stroke="#000" stroke-width="0.5" xml:space="preserve">38  [15:18:16.655]</text>
<text x="311" y="1068.6" font-size="24" textLength="700.3" lengthAdjust="spacing" stroke="#000" stroke-width="0.5" xml:space="preserve">Measuring distance:659mmSignal result: 169</text>
<text x="19.5" y="1124.6" font-size="24" letter-spacing="4.85" stroke="#000" stroke-width="0.5" xml:space="preserve">39  [15:18:17.080]</text>
<text x="311" y="1124.6" font-size="24" textLength="746.5" lengthAdjust="spacing" stroke="#000" stroke-width="0.5" xml:space="preserve">Receive:AA 00 00 22 00 03 00 00 02 EB 01 B3 C6</text>
<text x="19.5" y="1152.6" font-size="24" letter-spacing="4.85" stroke="#000" stroke-width="0.5" xml:space="preserve">39  [15:18:17.080]</text>
<text x="311" y="1152.6" font-size="24" textLength="700.3" lengthAdjust="spacing" stroke="#000" stroke-width="0.5" xml:space="preserve">Measuring distance:747mmSignal result: 435</text>
<text x="19.5" y="1208.6" font-size="24" letter-spacing="4.85" stroke="#000" stroke-width="0.5" xml:space="preserve">40  [15:18:17.506]</text>
<text x="311" y="1208.6" font-size="24" textLength="744.5" lengthAdjust="spacing" stroke="#000" stroke-width="0.5" xml:space="preserve">Receive:AA 00 00 22 00 03 00 00 03 C0 03 4E 39</text>
<text x="19.5" y="1236.6" font-size="24" letter-spacing="4.85" stroke="#000" stroke-width="0.5" xml:space="preserve">40  [15:18:17.506]</text>
<text x="311" y="1236.6" font-size="24" textLength="700.3" lengthAdjust="spacing" stroke="#000" stroke-width="0.5" xml:space="preserve">Measuring distance:960mmSignal result: 846</text>
<text x="19.5" y="1292.6" font-size="24" letter-spacing="4.85" stroke="#000" stroke-width="0.5" xml:space="preserve">41  [15:18:17.932]</text>
<text x="311" y="1292.6" font-size="24" textLength="745.5" lengthAdjust="spacing" stroke="#000" stroke-width="0.5" xml:space="preserve">Receive:AA 00 00 22 00 03 00 00 06 58 06 93 1C</text>
<text x="19.5" y="1320.6" font-size="24" letter-spacing="4.85" stroke="#000" stroke-width="0.5" xml:space="preserve">41  [15:18:17.932]</text>
<text x="311" y="1320.6" font-size="24" textLength="738.4" lengthAdjust="spacing" stroke="#000" stroke-width="0.5" xml:space="preserve">Measuring distance:1624mmSignal result: 1683</text>
<text x="1139.0" y="1394.2" font-size="24.5" fill="#fff" stroke="#fff" stroke-width="0.9" text-anchor="middle" textLength="258" lengthAdjust="spacing">Range Control area</text>
<text x="167" y="1455" font-size="24" fill="#000" stroke="#000" stroke-width="0.45" text-anchor="start" textLength="56.5" lengthAdjust="spacing">Laser</text>
<text x="249.5" y="1455" font-size="24" fill="#000" stroke="#000" stroke-width="0.45" text-anchor="start" textLength="28" lengthAdjust="spacing">on</text>
<text x="174.5" y="1510.7" font-size="24" fill="#000" stroke="#000" stroke-width="0.45" text-anchor="start" textLength="152.5" lengthAdjust="spacing">Auto Measure</text>
<text x="481.5" y="1510.7" font-size="24" fill="#000" stroke="#000" stroke-width="0.45" text-anchor="start" textLength="152.5" lengthAdjust="spacing">Slow Measure</text>
<text x="790.5" y="1510.7" font-size="24" fill="#000" stroke="#000" stroke-width="0.45" text-anchor="start" textLength="143" lengthAdjust="spacing">Fast Measure</text>
<text x="1066" y="1510.5" font-size="24" fill="#000" stroke="#000" stroke-width="0.45" text-anchor="start" textLength="167" lengthAdjust="spacing">Single Measure</text>
<text x="1361" y="1510.5" font-size="24" fill="#000" stroke="#000" stroke-width="0.45" text-anchor="start" textLength="174" lengthAdjust="spacing">Repeat measure</text>
<text x="1691.5" y="1510.5" font-size="24" fill="#000" stroke="#000" stroke-width="0.45" text-anchor="start" textLength="108" lengthAdjust="spacing">Save Data</text>
<text x="1980" y="1510.5" font-size="24" fill="#000" stroke="#000" stroke-width="0.45" text-anchor="start" textLength="127.5" lengthAdjust="spacing">Delete Data</text>
<text x="169.5" y="1567.3" font-size="24" fill="#000" stroke="#000" stroke-width="0.45" text-anchor="start" textLength="113" lengthAdjust="spacing">Send Data</text>
<text x="482.5" y="1567" font-size="24" fill="#000" stroke="#000" stroke-width="0.45" text-anchor="start" textLength="104.5" lengthAdjust="spacing">HEX Send</text>
<text x="790.5" y="1567" font-size="24" fill="#000" stroke="#000" stroke-width="0.45" text-anchor="start" textLength="147.5" lengthAdjust="spacing">Periodic Send</text>
<text x="1140.5" y="1567" font-size="24" fill="#000" stroke="#000" stroke-width="0.45" text-anchor="start" textLength="98.5" lengthAdjust="spacing">Ms/Once</text>
<text x="162.5" y="1623" font-size="24" fill="#000" stroke="#000" stroke-width="0.45" text-anchor="start" textLength="147.5" lengthAdjust="spacing">Custom Input</text>
<text x="20.5" y="1692.8" font-size="24" fill="#000" stroke="#000" stroke-width="0.45" text-anchor="start" textLength="225" lengthAdjust="spacing">www.meskernel.com</text>
<text x="2573.0" y="78.2" font-size="24.5" fill="#fff" stroke="#fff" stroke-width="0.9" text-anchor="middle" textLength="292" lengthAdjust="spacing">Serial Port setup area</text>
<text x="2316" y="135" font-size="24" fill="#000" stroke="#000" stroke-width="0.45" text-anchor="start" textLength="131" lengthAdjust="spacing">Serial Select</text>
<text x="2316" y="183" font-size="24" fill="#000" stroke="#000" stroke-width="0.45" text-anchor="start" textLength="143" lengthAdjust="spacing">Module Type</text>
<text x="2316" y="231" font-size="24" fill="#000" stroke="#000" stroke-width="0.45" text-anchor="start" textLength="98.5" lengthAdjust="spacing">Baudrate</text>
<text x="2316" y="279" font-size="24" fill="#000" stroke="#000" stroke-width="0.45" text-anchor="start" textLength="162" lengthAdjust="spacing">Check Formula</text>
<text x="2316" y="327" font-size="24" fill="#000" stroke="#000" stroke-width="0.45" text-anchor="start" textLength="157.5" lengthAdjust="spacing">Mode Address</text>
<text x="2523.5" y="135" font-size="24" fill="#000" stroke="#000" stroke-width="0.45" text-anchor="start" textLength="272.5" lengthAdjust="spacing">COM3 USB-SERIAL CH34</text>
<text x="2523.5" y="183" font-size="24" fill="#000" stroke="#000" stroke-width="0.45" text-anchor="start" textLength="58" lengthAdjust="spacing">U85B</text>
<text x="2523.5" y="231" font-size="24" fill="#000" stroke="#000" stroke-width="0.45" text-anchor="start" textLength="66" lengthAdjust="spacing">19200</text>
<text x="2523.5" y="279" font-size="24" fill="#000" stroke="#000" stroke-width="0.45" text-anchor="start" textLength="107" lengthAdjust="spacing">No-check</text>
<text x="2519.5" y="327" font-size="24" fill="#000" stroke="#000" stroke-width="0.45" text-anchor="start" textLength="26.5" lengthAdjust="spacing">00</text>
<text x="2312.5" y="378.3" font-size="24" fill="#000" stroke="#000" stroke-width="0.45" text-anchor="start" textLength="125" lengthAdjust="spacing">Open Serial</text>
<text x="2318" y="434.6" font-size="24" fill="#000" stroke="#000" stroke-width="0.45" text-anchor="start" textLength="107.5" lengthAdjust="spacing">Set Offset</text>
<text x="2319" y="490.5" font-size="24" fill="#000" stroke="#000" stroke-width="0.45" text-anchor="start" textLength="164" lengthAdjust="spacing">Reset Baudrate</text>
<text x="2523.5" y="490.5" font-size="24" fill="#000" stroke="#000" stroke-width="0.45" text-anchor="start" textLength="14" lengthAdjust="spacing">0</text>
<text x="2318" y="546.4" font-size="24" fill="#000" stroke="#000" stroke-width="0.45" text-anchor="start" textLength="128.5" lengthAdjust="spacing">Set Address</text>
<text x="2316.5" y="598.6" font-size="24" fill="#000" stroke="#000" stroke-width="0.45" text-anchor="start" textLength="133" lengthAdjust="spacing">Old Address</text>
<text x="2316.5" y="647" font-size="24" fill="#000" stroke="#000" stroke-width="0.45" text-anchor="start" textLength="143.5" lengthAdjust="spacing">New Address</text>
<text x="2573.0" y="712.2" font-size="24.5" fill="#fff" stroke="#fff" stroke-width="0.9" text-anchor="middle" textLength="262" lengthAdjust="spacing">Image Preview area</text>
<text x="2573.0" y="1346.2" font-size="24.5" fill="#fff" stroke="#fff" stroke-width="0.9" text-anchor="middle" textLength="225" lengthAdjust="spacing">Range Line chart</text>
<text x="2302.5" y="1403" font-size="24" fill="#fff" stroke="#fff" stroke-width="0.3" text-anchor="start" textLength="166.5" lengthAdjust="spacing">Close line chart</text>
<text x="2494.5" y="1403" font-size="24" fill="#000" stroke="#000" stroke-width="0.45" text-anchor="start" textLength="152.5" lengthAdjust="spacing">Start Tracking</text>
<text x="2682" y="1403" font-size="24" fill="#000" stroke="#000" stroke-width="0.45" text-anchor="start" textLength="160.5" lengthAdjust="spacing">Reset Graphics</text>
<text x="2573.0" y="1469.2" font-size="24.5" fill="#fff" stroke="#fff" stroke-width="0.9" text-anchor="middle" textLength="262" lengthAdjust="spacing">Module Status read</text>
<text x="2323.3" y="1524.6" font-size="24" fill="#000" stroke="#000" stroke-width="0.45" text-anchor="start" textLength="125" lengthAdjust="spacing">SW Version</text>
<text x="2511.2" y="1524.6" font-size="24" fill="#000" stroke="#000" stroke-width="0.45" text-anchor="start" textLength="129.5" lengthAdjust="spacing">HW Version</text>
<text x="2685.2" y="1524.6" font-size="24" fill="#000" stroke="#000" stroke-width="0.45" text-anchor="start" textLength="157.5" lengthAdjust="spacing">Serial Number</text>
<text x="2342" y="1577" font-size="24" fill="#000" stroke="#000" stroke-width="0.45" text-anchor="start" textLength="88" lengthAdjust="spacing">Address</text>
<text x="2542.5" y="1577" font-size="24" fill="#000" stroke="#000" stroke-width="0.45" text-anchor="start" textLength="66.5" lengthAdjust="spacing">Offset</text>
<text x="2721.5" y="1577" font-size="24" fill="#000" stroke="#000" stroke-width="0.45" text-anchor="start" textLength="85" lengthAdjust="spacing">Voltage</text>
<text x="2315.5" y="1628.7" font-size="24" fill="#000" stroke="#000" stroke-width="0.45" text-anchor="start" textLength="140.5" lengthAdjust="spacing">Temperature</text>
<text x="2542" y="1628.7" font-size="24" fill="#000" stroke="#000" stroke-width="0.45" text-anchor="start" textLength="67.5" lengthAdjust="spacing">Status</text>
<text x="2732.2" y="1628.7" font-size="24" fill="#000" stroke="#000" stroke-width="0.45" text-anchor="start" textLength="63.5" lengthAdjust="spacing">Angle</text>
</svg>
</body></html>
